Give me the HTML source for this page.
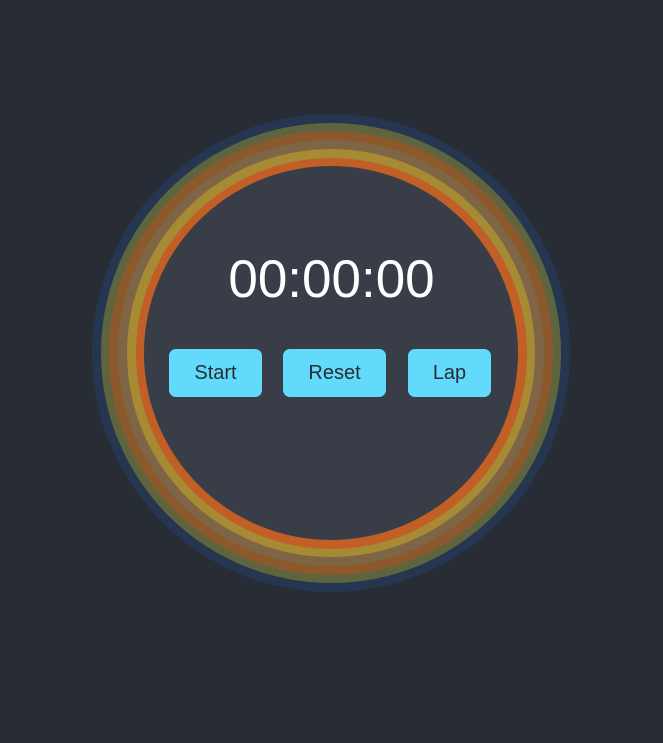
<!DOCTYPE html>
<html><head><meta charset="utf-8"><style>
html,body{margin:0;padding:0;width:663px;height:743px;background:#282c34;overflow:hidden;font-family:"Liberation Sans",sans-serif}
.r{position:absolute;border-radius:50%}
.t{position:absolute;left:0;width:663px;text-align:center;top:248px;font-size:53px;color:#fff;line-height:64px}
.b{position:absolute;top:349px;height:48px;background:#61dafb;border-radius:7px;color:#282c34;font-size:20px;line-height:48px;text-align:center}
</style></head><body>
<div class="r" style="left:92px;top:114px;width:478px;height:478px;background:#253650"></div>
<div class="r" style="left:100.7px;top:122.7px;width:460.6px;height:460.6px;background:#5e653e"></div>
<div class="r" style="left:109.4px;top:131.4px;width:443.2px;height:443.2px;background:#8c592c"></div>
<div class="r" style="left:118.1px;top:140.1px;width:425.8px;height:425.8px;background:#7e6546"></div>
<div class="r" style="left:126.8px;top:148.8px;width:408.4px;height:408.4px;background:#a68a34"></div>
<div class="r" style="left:135.5px;top:157.5px;width:391px;height:391px;background:#c15f26"></div>
<div class="r" style="left:144px;top:166px;width:374px;height:374px;background:#393d47"></div>
<div class="t">00:00:00</div>
<div class="b" style="left:169px;width:93px">Start</div>
<div class="b" style="left:283px;width:103px">Reset</div>
<div class="b" style="left:408px;width:83px">Lap</div>
</body></html>
